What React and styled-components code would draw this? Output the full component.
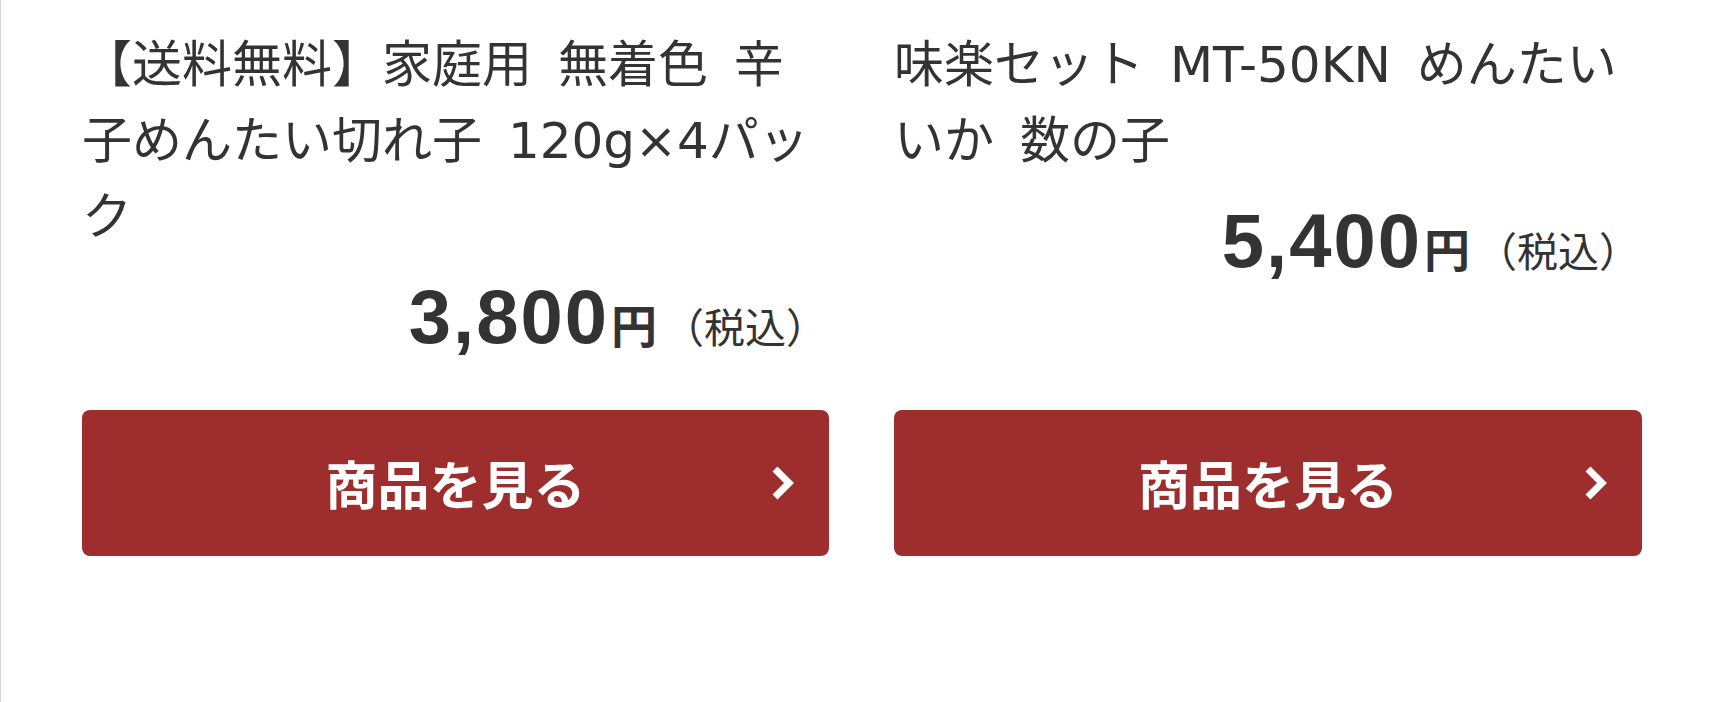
import React from "react";
import styled, { createGlobalStyle } from "styled-components";

const GlobalStyle = createGlobalStyle`
  html, body {
    margin: 0;
    padding: 0;
    background: #ffffff;
  }
  body {
    font-family: "Noto Sans CJK JP", sans-serif;
    color: #333333;
  }
`;

const Page = styled.main`
  min-height: 702px;
  box-sizing: border-box;
  border-left: 1px solid #d6d6d6;
  padding: 27px 80px 0 81px;
`;

const ProductGrid = styled.section`
  display: grid;
  grid-template-columns: 747px 748px;
  column-gap: 65px;
  align-items: stretch;
`;

const Card = styled.article`
  display: flex;
  flex-direction: column;
`;

const Title = styled.h3`
  margin: 0;
  font-family: "DejaVu Sans", "Noto Sans CJK JP", sans-serif;
  font-weight: 400;
  font-size: 50px;
  line-height: 76px;
  word-spacing: 10px;
  color: #333333;
`;

const Price = styled.p`
  margin: 24px 2px 47px 0;
  text-align: right;
  font-family: "Liberation Sans", Arial, sans-serif;
  font-size: 76px;
  line-height: 76px;
  color: #333333;
  white-space: nowrap;
`;

const Amount = styled.span`
  font-weight: 700;
  letter-spacing: 2px;
`;

const Yen = styled.span`
  font-family: "Noto Sans CJK JP", sans-serif;
  font-weight: 700;
  font-size: 46px;
  margin-left: 2px;
`;

const Tax = styled.span`
  font-family: "Noto Sans CJK JP", sans-serif;
  font-weight: 400;
  font-size: 41px;
  margin-left: 6px;
`;

const ViewButton = styled.a`
  margin-top: auto;
  height: 146px;
  border-radius: 8px;
  background: #9e2d2e;
  color: #ffffff;
  text-decoration: none;
  display: grid;
  grid-template-columns: 1fr auto 1fr;
  align-items: center;
  font-family: "Noto Sans CJK JP", sans-serif;
  font-weight: 700;
  font-size: 52px;
  line-height: 1;
`;

const Label = styled.span`
  grid-column: 2;
`;

const Chevron = styled.svg`
  grid-column: 3;
  justify-self: end;
  margin-right: 34px;
  width: 24px;
  height: 36px;
`;

const ChevronIcon = () => (
  <Chevron viewBox="0 0 24 36" aria-hidden="true">
    <polyline
      points="4,4 18,18 4,32"
      fill="none"
      stroke="#ffffff"
      strokeWidth="7"
      strokeLinejoin="miter"
      strokeLinecap="butt"
    />
  </Chevron>
);

const products = [
  {
    id: "kirekoset",
    name: "【送料無料】家庭用 無着色 辛子めんたい切れ子 120g×4パック",
    price: "3,800",
  },
  {
    id: "mt50kn",
    name: "味楽セット MT-50KN めんたいいか 数の子",
    price: "5,400",
  },
];

export default function App() {
  return (
    <>
      <GlobalStyle />
      <Page>
        <ProductGrid>
          {products.map((p) => (
            <Card key={p.id}>
              <Title>{p.name}</Title>
              <Price>
                <Amount>{p.price}</Amount>
                <Yen>円</Yen>
                <Tax>（税込）</Tax>
              </Price>
              <ViewButton href="#">
                <Label>商品を見る</Label>
                <ChevronIcon />
              </ViewButton>
            </Card>
          ))}
        </ProductGrid>
      </Page>
    </>
  );
}
